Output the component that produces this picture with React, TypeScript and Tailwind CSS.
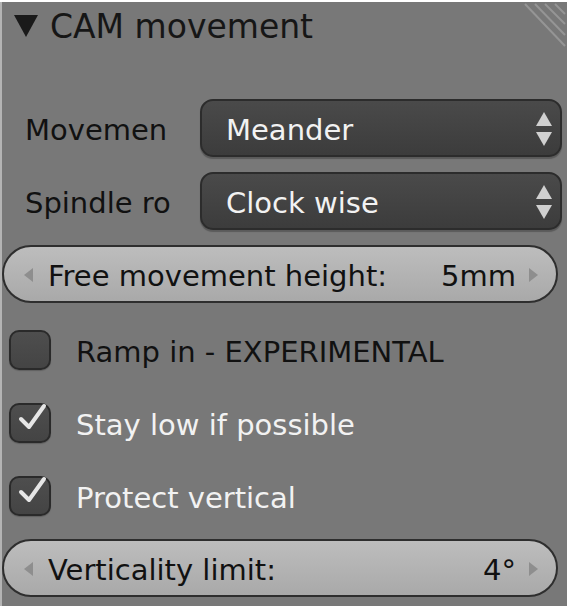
import React from "react";

const font = { fontFamily: '"DejaVu Sans", "Open Sans", sans-serif' };

function Dropdown({ label, value }: { label: string; value: string }) {
  return (
    <div className="flex items-center h-[58px]">
      <div className="w-[198px] pl-[23px] pt-[5px] text-[29px] text-[#111] leading-none">{label}</div>
      <div className="relative flex items-center w-[362px] h-[58px] rounded-[13px] border-2 border-[#2c2c2c] bg-gradient-to-b from-[#4a4a4a] to-[#3c3c3c] shadow-[0_2px_1px_rgba(0,0,0,0.25)] pl-[24px]">
        <span className="pt-[4px] text-[29px] text-[#f2f2f2] leading-none">{value}</span>
        <svg className="absolute right-[7px] top-[10px]" width="18" height="36" viewBox="0 0 18 36">
          <polygon points="9,1 17,15 1,15" fill="#d0d0d0" />
          <polygon points="1,21 17,21 9,35" fill="#d0d0d0" />
        </svg>
      </div>
    </div>
  );
}

function NumField({ label, value }: { label: string; value: string }) {
  return (
    <div className="relative flex items-center w-[556px] h-[58px] rounded-full border-2 border-[#2e2e2e] bg-gradient-to-b from-[#bdbdbd] to-[#a9a9a9] pl-[44px] pr-[40px]">
      <svg className="absolute left-[20px] top-[21px]" width="9" height="14" viewBox="0 0 9 14">
        <polygon points="9,0 9,14 0,7" fill="#8e8e8e" />
      </svg>
      <span className="pt-[5px] text-[29px] text-[#111] leading-none flex-1">{label}</span>
      <span className="pt-[5px] text-[29px] text-[#111] leading-none">{value}</span>
      <svg className="absolute right-[18px] top-[21px]" width="9" height="14" viewBox="0 0 9 14">
        <polygon points="0,0 0,14 9,7" fill="#8e8e8e" />
      </svg>
    </div>
  );
}

function Check({ label, checked }: { label: string; checked: boolean }) {
  return (
    <div className="flex items-center h-[42px]">
      <div className="relative ml-[7px] w-[42px] h-[40px] rounded-[10px] border-2 border-[#2a2a2a] bg-gradient-to-b from-[#4e4e4e] to-[#444] shadow-[0_1px_1px_rgba(0,0,0,0.2)]">
        {checked && (
          <svg className="absolute left-[5px] top-[-5px]" width="32" height="36" viewBox="0 0 32 36">
            <polyline points="5,19 13,27 28,6" fill="none" stroke="#e6e6e6" strokeWidth="4" strokeLinecap="round" strokeLinejoin="round" />
          </svg>
        )}
      </div>
      <span className={`ml-[25px] pt-[4px] text-[29px] leading-none ${checked ? "text-[#f2f2f2]" : "text-[#111]"}`}>{label}</span>
    </div>
  );
}

export default function App() {
  return (
    <div className="w-[571px] h-[612px] bg-white pt-[2px]" style={font}>
      <div className="relative w-[567px] h-[604px] bg-[#787878] border-l-2 border-[#b4b4b4] overflow-hidden">
        <svg className="absolute right-0 top-0" width="50" height="52" viewBox="0 0 50 52">
          <line x1="8" y1="2" x2="48" y2="44" stroke="#959595" strokeWidth="2" />
          <line x1="18" y1="2" x2="48" y2="33" stroke="#959595" strokeWidth="2" />
          <line x1="28" y1="2" x2="48" y2="22" stroke="#959595" strokeWidth="2" />
          <line x1="38" y1="2" x2="48" y2="12" stroke="#959595" strokeWidth="2" />
        </svg>
        <div className="flex items-center h-[48px] pl-[12px]">
          <svg width="24" height="22" viewBox="0 0 24 22">
            <polygon points="0,0 24,0 12,22" fill="#1a1a1a" />
          </svg>
          <span className="ml-[12px] text-[33px] text-[#161616] leading-none">CAM movement</span>
        </div>
        <div className="mt-[49px]">
          <Dropdown label="Movemen" value="Meander" />
        </div>
        <div className="mt-[15px]">
          <Dropdown label="Spindle ro" value="Clock wise" />
        </div>
        <div className="mt-[15px]">
          <NumField label="Free movement height:" value="5mm" />
        </div>
        <div className="mt-[26px]">
          <Check label="Ramp in - EXPERIMENTAL" checked={false} />
        </div>
        <div className="mt-[31px]">
          <Check label="Stay low if possible" checked={true} />
        </div>
        <div className="mt-[31px]">
          <Check label="Protect vertical" checked={true} />
        </div>
        <div className="mt-[22px]">
          <NumField label="Verticality limit:" value="4°" />
        </div>
      </div>
    </div>
  );
}
